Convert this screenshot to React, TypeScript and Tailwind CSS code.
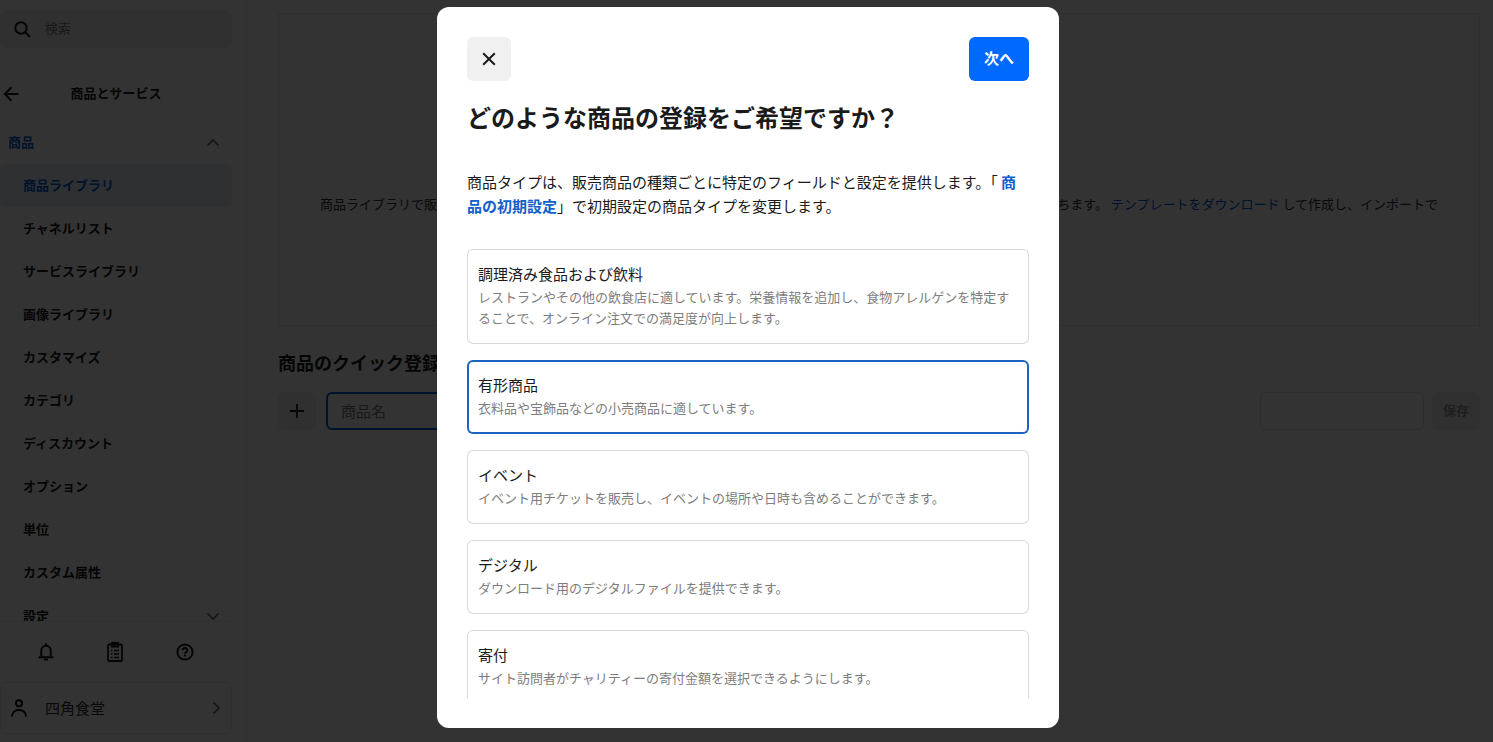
import { useState } from "react";

const subItems = [
  "商品ライブラリ",
  "チャネルリスト",
  "サービスライブラリ",
  "画像ライブラリ",
  "カスタマイズ",
  "カテゴリ",
  "ディスカウント",
  "オプション",
  "単位",
  "カスタム属性",
];

const productTypes = [
  {
    title: "調理済み食品および飲料",
    description:
      "レストランやその他の飲食店に適しています。栄養情報を追加し、食物アレルゲンを特定することで、オンライン注文での満足度が向上します。",
  },
  { title: "有形商品", description: "衣料品や宝飾品などの小売商品に適しています。" },
  { title: "イベント", description: "イベント用チケットを販売し、イベントの場所や日時も含めることができます。" },
  { title: "デジタル", description: "ダウンロード用のデジタルファイルを提供できます。" },
  { title: "寄付", description: "サイト訪問者がチャリティーの寄付金額を選択できるようにします。" },
];

function Chevron({ className }: { className: string }) {
  return (
    <svg viewBox="0 0 14 14" className={className} fill="none" stroke="currentColor" strokeWidth="1.6" aria-hidden="true">
      <path d="M1.5 4.5 7 10l5.500-5.500" />
    </svg>
  );
}

function Sidebar() {
  return (
    <aside className="flex w-[247px] shrink-0 flex-col border-r border-[#ededed] pt-2.5 pr-3.5">
      <label className="flex h-[38px] shrink-0 items-center gap-3.5 rounded-md bg-[#f0f0f0] pl-3.5">
        <svg viewBox="0 0 17 17" className="size-[17px] shrink-0" fill="none" stroke="currentColor" strokeWidth="2" aria-hidden="true">
          <circle cx="7" cy="7" r="5.700" />
          <path d="m11 11 5 5" />
        </svg>
        <input
          type="search"
          aria-label="検索"
          placeholder="検索"
          className="w-full min-w-0 bg-transparent pb-0.5 text-[13px] outline-none placeholder:text-[#7a7a7a]"
        />
      </label>

      <div className="flex h-[73px] shrink-0 items-end">
        <div className="flex w-full items-center">
          <button type="button" aria-label="戻る" className="w-6 pl-[3px]">
            <svg viewBox="0 0 16 16" className="size-4" fill="none" stroke="currentColor" strokeWidth="2" aria-hidden="true">
              <path d="M8.500 1.200 1.800 8l6.700 6.800M2 8h13.500" />
            </svg>
          </button>
          <h2 className="flex-1 pr-6 pb-0.5 text-center text-[13px] leading-[52px] font-semibold">商品とサービス</h2>
        </div>
      </div>

      <nav className="min-h-0 flex-1 overflow-hidden text-[13px] font-semibold">
        <button type="button" className="flex h-[43px] w-full items-center justify-between pr-3 pl-2 text-[#005ad9]">
          <span className="pb-0.5">商品</span>
          <Chevron className="size-3.5 rotate-180 text-[#666]" />
        </button>
        <ul>
          {subItems.map((item, i) => (
            <li key={item}>
              <a
                href="#"
                aria-current={i === 0 ? "page" : undefined}
                className={`flex h-[43px] items-center rounded-md pb-0.5 pl-[23px] ${i === 0 ? "bg-[#e5edfa] text-[#005ad9]" : ""}`}
              >
                {item}
              </a>
            </li>
          ))}
        </ul>
        <button type="button" className="flex h-[43px] w-full items-center justify-between pr-3 pl-[23px]">
          設定
          <Chevron className="size-3.5 text-[#666]" />
        </button>
      </nav>

      <div className="flex h-[61px] shrink-0 items-center justify-around border-t border-[#ededed] px-3">
        <button type="button" aria-label="通知">
          <svg viewBox="0 0 16 18" className="h-[18px] w-4" fill="none" stroke="currentColor" strokeWidth="2" aria-hidden="true">
            <path d="M3.300 14V7.500a4.700 4.700 0 0 1 9.400 0V14M.5 14.300h15" />
            <path d="M8 .5v2.500M6 16.500h4" strokeWidth="2.200" />
          </svg>
        </button>
        <button type="button" aria-label="タスク">
          <svg viewBox="0 0 16 20" className="h-5 w-4" fill="none" stroke="currentColor" strokeWidth="1.800" aria-hidden="true">
            <rect x="1" y="2.500" width="14" height="16.500" rx="1" />
            <path d="M4.800 1h6.400v3.500H4.800z" />
            <path d="M4 8.500h1.500M7 8.500h5M4 12h1.500M7 12h5M4 15.500h1.500M7 15.500h5" strokeWidth="1.400" />
          </svg>
        </button>
        <button type="button" aria-label="ヘルプ">
          <svg viewBox="0 0 18 18" className="size-[18px]" fill="none" stroke="currentColor" strokeWidth="2" aria-hidden="true">
            <circle cx="9" cy="9" r="7.600" />
            <path d="M6.700 7.300a2.300 2.300 0 1 1 3.500 1.900c-.8.500-1.200.8-1.200 1.500M9 11.800v1.800" />
          </svg>
        </button>
      </div>

      <button
        type="button"
        className="mb-2 flex h-[52px] shrink-0 items-center rounded-md border border-[#e6e6e6] pr-2 pl-2.5 text-[15px] text-[#333]"
      >
        <svg viewBox="0 0 16 18" className="h-[18px] w-4 text-black" fill="none" stroke="currentColor" strokeWidth="1.900" aria-hidden="true">
          <circle cx="8" cy="4.300" r="3.100" />
          <path d="M1 17.500c0-4 3-6.500 7-6.500s7 2.500 7 6.500" />
        </svg>
        <span className="flex-1 pl-[18px] text-left">四角食堂</span>
        <Chevron className="size-3.5 -rotate-90 text-[#666]" />
      </button>
    </aside>
  );
}

function Library() {
  return (
    <main className="min-w-0 flex-1 pt-[13px] pr-[13px] pl-[31px]">
      <section className="flex h-[313px] items-center justify-between border border-[#e6e6e6] px-[41px] pt-[68px] text-[13px] text-[#333]">
        <p>商品ライブラリで販売</p>
        <p>
          役立ちます。{" "}
          <a href="#" className="text-[#005ad9]">
            テンプレートをダウンロード
          </a>{" "}
          して作成し、インポートで
        </p>
      </section>

      <h2 className="mt-[22px] text-[18px] leading-[28px] font-semibold">商品のクイック登録</h2>
      <form className="mt-4 flex h-[38px] justify-between">
        <div className="flex w-1/2">
          <button type="button" aria-label="追加" className="flex w-[38px] items-center justify-center rounded-md bg-[#f0f0f0]">
            <svg viewBox="0 0 14 14" className="size-3.5" stroke="currentColor" strokeWidth="1.800" aria-hidden="true">
              <path d="M7 0v14M0 7h14" />
            </svg>
          </button>
          <input
            aria-label="商品名"
            placeholder="商品名"
            className="ml-2.5 min-w-0 flex-1 rounded-md border-2 border-[#005ad9] px-[13px] text-[15px] outline-none placeholder:text-[#7a7a7a]"
          />
        </div>
        <div className="flex gap-2">
          <input aria-label="価格" className="w-[164px] rounded-md border border-[#dedede] px-3 text-[15px] outline-none" />
          <button type="button" disabled className="w-12 rounded-md bg-[#f0f0f0] pb-0.5 text-[13px] font-semibold text-[#999]">
            保存
          </button>
        </div>
      </form>
    </main>
  );
}

function ProductTypeDialog() {
  const [selected, setSelected] = useState(1);

  return (
    <div className="fixed inset-0 flex justify-center bg-black/80 pt-[7px] pb-3.5 pl-[3px]">
      <div
        role="dialog"
        aria-modal="true"
        aria-labelledby="dialog-title"
        className="flex w-full max-w-[622px] flex-col rounded-xl bg-white p-[30px]"
      >
        <div className="flex shrink-0 items-center justify-between">
          <button type="button" aria-label="閉じる" className="flex h-11 w-11 items-center justify-center rounded-md bg-[#f0f0f0]">
            <svg viewBox="0 0 14 14" className="size-3.5" stroke="currentColor" strokeWidth="2" aria-hidden="true">
              <path d="m1.200 1.200 11.600 11.600M12.800 1.200 1.200 12.800" />
            </svg>
          </button>
          <button type="button" className="h-11 w-[60px] rounded-md bg-[#006aff] pb-0.5 text-[15px] font-semibold text-white">
            次へ
          </button>
        </div>

        <div className="min-h-0 flex-1 overflow-hidden pt-5">
          <h1 id="dialog-title" className="text-[24px] leading-8 font-semibold">
            どのような商品の登録をご希望ですか？
          </h1>
          <p className="mt-[37px] text-[15px] leading-6">
            商品タイプは、販売商品の種類ごとに特定のフィールドと設定を提供します。「{" "}
            <a href="#" className="font-semibold text-[#1160cb]">
              商品の初期設定
            </a>
            」で初期設定の商品タイプを変更します。
          </p>
          <div role="radiogroup" aria-labelledby="dialog-title" className="mt-[31px] flex flex-col gap-4">
            {productTypes.map((type, i) => (
              <button
                key={type.title}
                type="button"
                role="radio"
                aria-checked={i === selected}
                onClick={() => setSelected(i)}
                className={`flex flex-col rounded-md px-[11px] pt-[13px] pb-4 text-left ring-inset ${
                  i === selected ? "ring-2 ring-[#1c64c0]" : "ring-1 ring-[#d9d9d9]"
                }`}
              >
                <span className="text-[15px] leading-6">{type.title}</span>
                <span className="text-[13px] leading-[21px] text-[#7d7d7d]">{type.description}</span>
              </button>
            ))}
          </div>
        </div>
      </div>
    </div>
  );
}

export default function App() {
  return (
    <div
      lang="ja"
      className="flex h-screen overflow-hidden bg-white font-['Noto_Sans_CJK_JP',sans-serif] text-[#1a1a1a]"
    >
      <Sidebar />
      <Library />
      <ProductTypeDialog />
    </div>
  );
}
